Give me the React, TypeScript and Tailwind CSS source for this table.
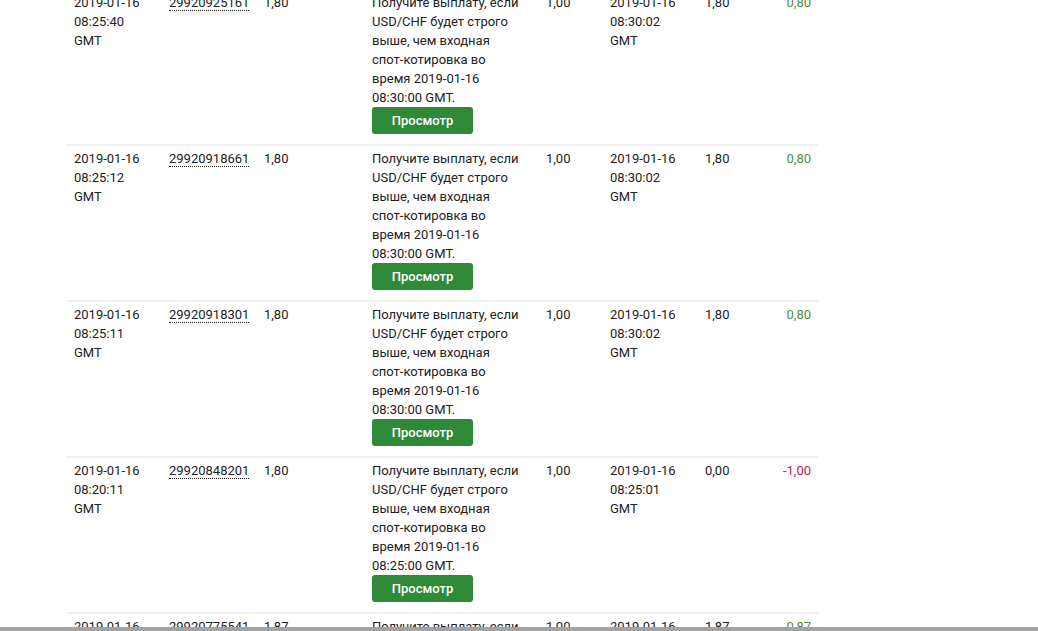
import React from 'react';

type Row = {
  start: string;
  id: string;
  stake: string;
  expiry: string;
  entry: string;
  end: string;
  payout: string;
  profit: string;
};

const rows: Row[] = [
  { start: '08:25:40', id: '29920925161', stake: '1,80', expiry: '08:30:00', entry: '1,00', end: '08:30:02', payout: '1,80', profit: '0,80' },
  { start: '08:25:12', id: '29920918661', stake: '1,80', expiry: '08:30:00', entry: '1,00', end: '08:30:02', payout: '1,80', profit: '0,80' },
  { start: '08:25:11', id: '29920918301', stake: '1,80', expiry: '08:30:00', entry: '1,00', end: '08:30:02', payout: '1,80', profit: '0,80' },
  { start: '08:20:11', id: '29920848201', stake: '1,80', expiry: '08:25:00', entry: '1,00', end: '08:25:01', payout: '0,00', profit: '-1,00' },
  { start: '08:15:09', id: '29920775541', stake: '1,87', expiry: '08:20:00', entry: '1,00', end: '08:20:01', payout: '1,87', profit: '0,87' },
];

const App: React.FC = () => {
  return (
    <div className="w-[1038px] h-[631px] overflow-hidden bg-white text-[13px] leading-[19px] text-[#222]" style={{ fontFamily: 'Roboto, "Liberation Sans", Arial, sans-serif' }}>
      <div className="ml-[66px] w-[752px] -mt-[12px]">
        {rows.map((r, i) => (
          <div key={r.id} className={`flex pt-[3px] pb-[10px] border-t-2 ${i === 0 ? 'border-transparent' : 'border-[#f0f0f0]'}`}>
            <div className="w-[95px] pl-2">
              2019-01-16<br />{r.start}<br />GMT
            </div>
            <div className="w-[95px] pl-2">
              <span className="border-b border-dotted border-[#222]">{r.id}</span>
            </div>
            <div className="w-[108px] pl-2">{r.stake}</div>
            <div className="w-[174px] pl-2">
              <div>
                Получите выплату, если<br />
                USD/CHF будет строго<br />
                выше, чем входная<br />
                спот-котировка во<br />
                время 2019-01-16<br />
                {r.expiry} GMT.
              </div>
              <button className="block w-[101px] h-[27px] rounded-[3px] bg-[#2f8a37] text-white font-medium text-[13px]">
                Просмотр
              </button>
            </div>
            <div className="w-[64px] pl-2">{r.entry}</div>
            <div className="w-[95px] pl-2">
              2019-01-16<br />{r.end}<br />GMT
            </div>
            <div className="w-[63px] pl-2">{r.payout}</div>
            <div className={`flex-1 pr-[7px] text-right ${r.profit.startsWith('-') ? 'text-[#c2185b]' : 'text-[#4e8c4a]'}`}>
              {r.profit}
            </div>
          </div>
        ))}
      </div>
      <div className="fixed bottom-0 left-0 w-[1038px] h-[4px] bg-[#a3a3a3]" />
    </div>
  );
};

export default App;
